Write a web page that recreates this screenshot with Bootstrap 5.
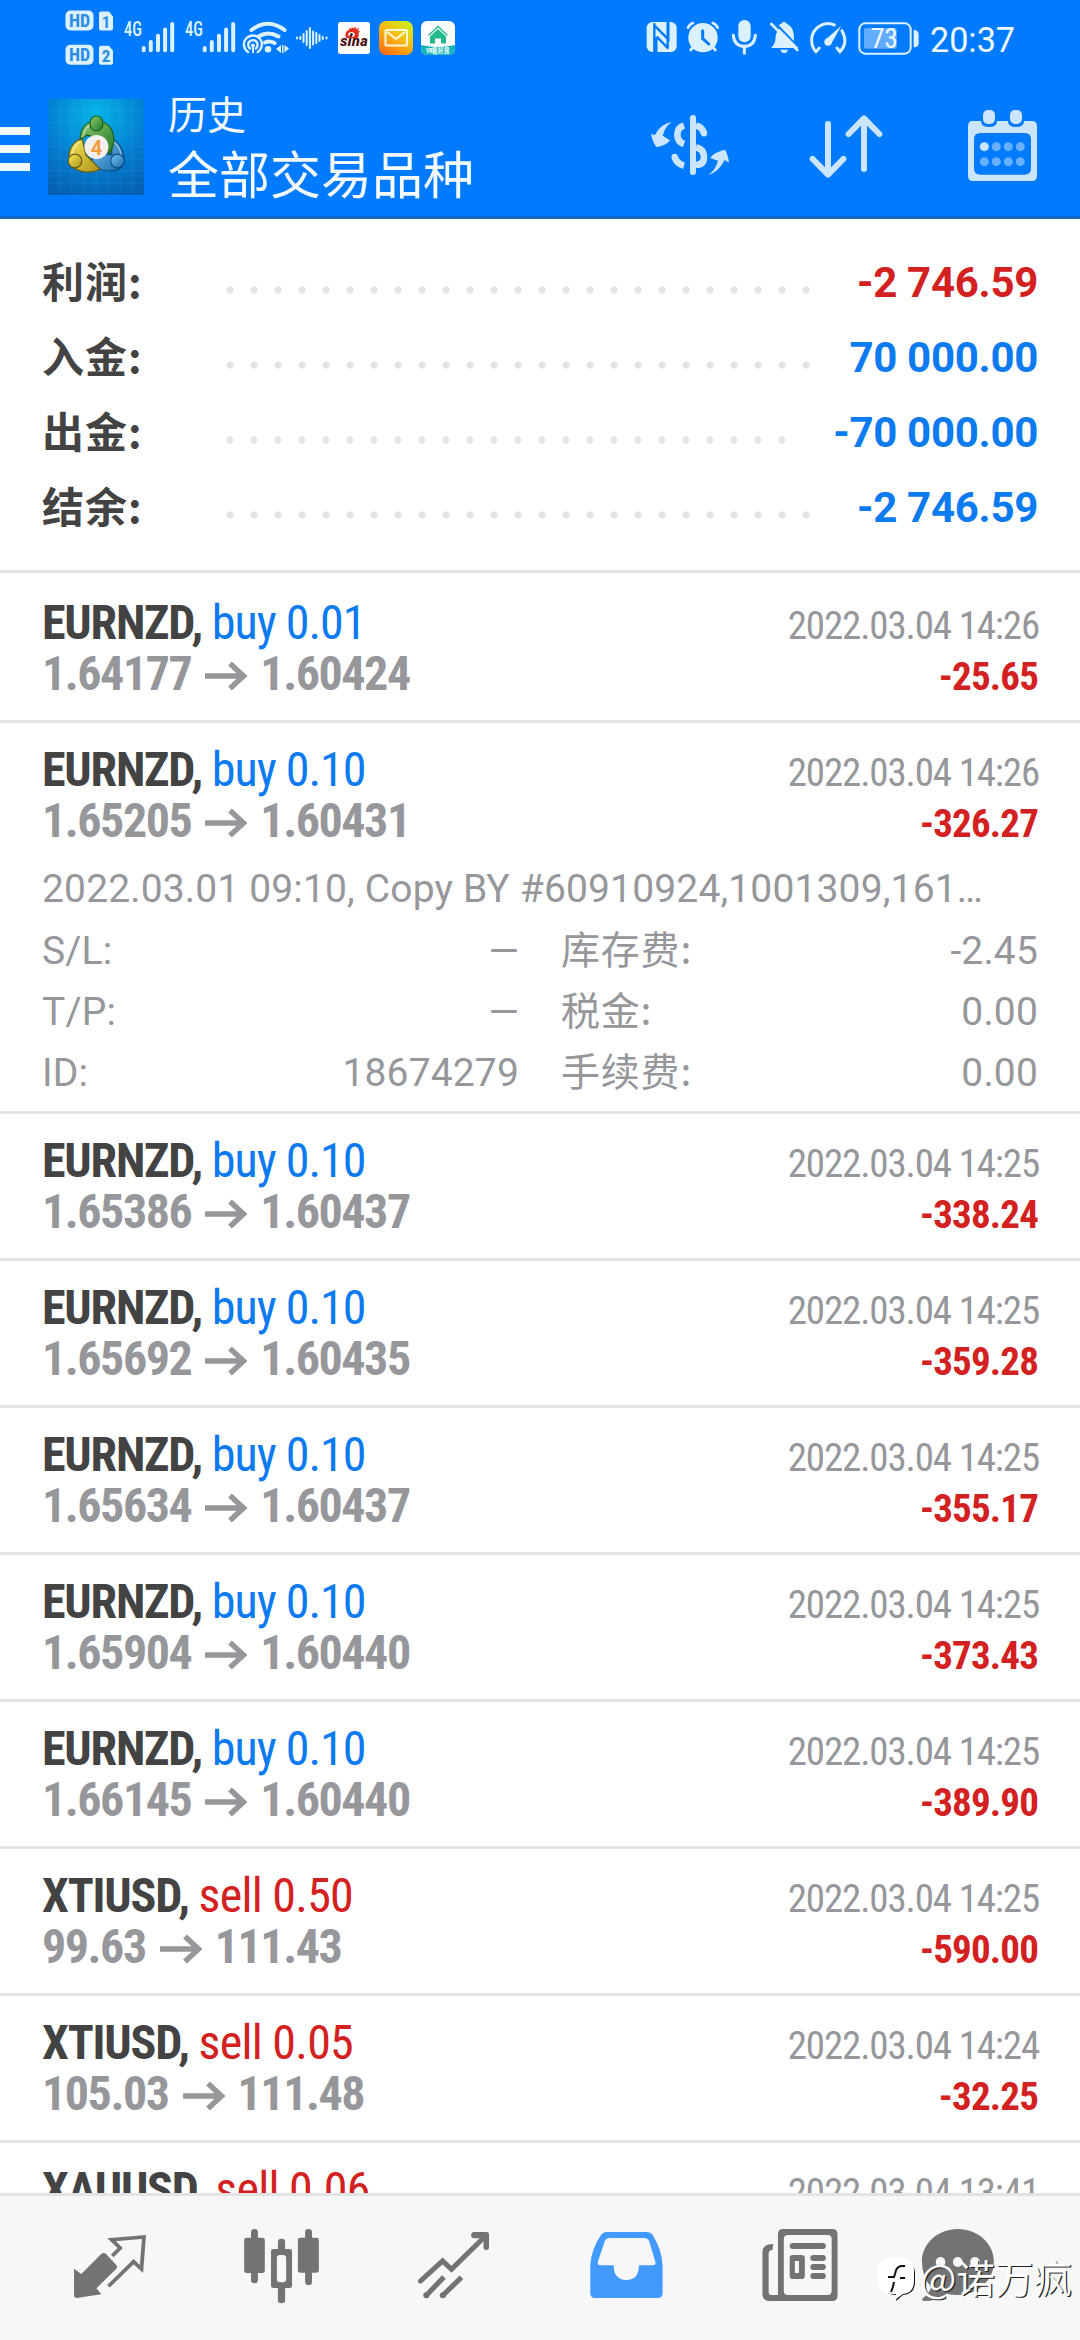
<!DOCTYPE html>
<html lang="zh-CN">
<head>
<meta charset="utf-8">
<meta name="viewport" content="width=device-width, initial-scale=1">
<title>历史</title>
<link rel="stylesheet" href="https://cdn.jsdelivr.net/npm/bootstrap@5.3.0/dist/css/bootstrap.min.css">
<style>
  :root { --blue:#007aff; --ink:#434343; --muted-ink:#96979b; --loss:#d32020; --gain:#0c7af0; --rule:#e3e3e3; }
  body { width:1080px; height:2340px; overflow:hidden; background:#fff; font-family:Roboto,"Noto Sans CJK SC",sans-serif; color:var(--ink); }
  svg { display:block; flex:none; }
  .app-head { background:var(--blue); height:219px; border-bottom:3px solid #1568c2; }
  .status { height:75px; }
  .status .ico { height:75px; fill:#dcf1ff; color:#dcf1ff; }
  .status text { font-family:"Roboto Condensed",Roboto,sans-serif; }
  .tools { height:141px; }
  .tools .ico { height:141px; fill:#cce5ff; stroke:#cce5ff; }
  .titles { font-family:"Noto Sans CJK SC",sans-serif; color:#f4faff; padding:12px 0 0 24px; }
  .title-sm { font-size:39px; line-height:50px; font-weight:400; }
  .title-lg { font-size:51px; line-height:70px; font-weight:400; }
  .summary { padding:26px 42px 25px; height:354px; border-bottom:3px solid var(--rule); }
  .sum-line { height:75px; line-height:75px; font-size:42px; font-weight:700; letter-spacing:-.3px; }
  .sum-name { width:176px; font-family:"Noto Sans CJK SC",sans-serif; line-height:67px; letter-spacing:1px; padding-top:1px; align-self:flex-start; }
  .dots { width:600px; height:75px; background:radial-gradient(circle at 12px 45px,#e3e3e3 3.2px,transparent 4px) 0 0/24px 75px repeat-x; }
  .dots-short { width:576px; }
  .deal { height:147px; padding:21px 42px 0; border-bottom:3px solid var(--rule); flex:none; }
  .deal.first { height:150px; padding-top:24px; }
  .deal.open { height:391px; }
  .deal-line { height:51px; line-height:51px; font-family:"Roboto Condensed",Roboto,sans-serif; white-space:nowrap; }
  .sym { font-size:48px; letter-spacing:-1.2px; }
  .sym b { font-weight:700; }
  .sym .buy { letter-spacing:-1px; }
  .sym .sell { letter-spacing:-.75px; }
  .price { font-size:48px; font-weight:700; letter-spacing:-1.45px; color:var(--muted-ink); }
  .price svg { margin:5px 13px 0 14px; }
  .when { font-size:39px; letter-spacing:-1.15px; color:var(--muted-ink); margin-right:-1px; }
  .result { font-size:39px; font-weight:700; letter-spacing:-.85px; color:var(--loss); }
  .buy { color:var(--gain); } .sell { color:var(--loss); }
  .more { margin-top:13px; font-size:39px; line-height:61px; color:var(--muted-ink); white-space:nowrap; letter-spacing:.15px; }
  .more-line { height:61px; }
  .more-l { width:477px; margin-right:42px; }
  .zh { font-family:"Noto Sans CJK SC",sans-serif; line-height:54px; letter-spacing:.8px; }
  .tabs { height:147px; border-top:3px solid var(--rule); background:#f7f7f7; }
  .tabs svg { fill:#737373; stroke:#737373; width:180px; height:144px; }
  .stamp { right:8px; bottom:39px; color:#fff; font:400 38.4px/50px "Noto Sans CJK SC",sans-serif; text-shadow:1.2px 1.2px 0 #222; letter-spacing:.1px; }
</style>
<script src="https://cdn.jsdelivr.net/npm/bootstrap@5.3.0/dist/js/bootstrap.bundle.min.js"></script>
</head>
<body class="d-flex flex-column position-relative m-0">

<header class="app-head flex-shrink-0">
  <div class="status d-flex">
    <!-- HD / SIM markers -->
    <svg class="ico" width="120" viewBox="0 0 120 75">
      <rect x="65.5" y="10.5" width="28" height="20" rx="5"/><rect x="65.5" y="44.7" width="28" height="20" rx="5"/>
      <path d="M101 11.5h8l4 5v12q0 2-2 2h-10q-2 0-2-2v-15q0-2 2-2zM101 45.7h8l4 5v12q0 2-2 2h-10q-2 0-2-2v-15q0-2 2-2z"/>
      <g fill="#2a8de6" font-weight="700" font-size="18" text-anchor="middle"><text x="79.5" y="27">HD</text><text x="79.5" y="61">HD</text><text x="106" y="27.5" font-size="17">1</text><text x="106" y="61.5" font-size="17">2</text></g>
    </svg>
    <svg class="ico" width="61" viewBox="120 0 61 75">
      <text x="124" y="36" font-size="20" font-weight="500" textLength="18" lengthAdjust="spacingAndGlyphs">4G</text>
      <path fill="none" stroke="currentColor" stroke-width="4" stroke-linecap="round" d="M143.7 48v2.2M150.8 42v8.2M158 35.7v14.5M165.1 29.5v20.7M172.2 24v26.2"/>
    </svg>
    <svg class="ico" width="60" viewBox="120 0 60 75">
      <text x="124" y="36" font-size="20" font-weight="500" textLength="18" lengthAdjust="spacingAndGlyphs">4G</text>
      <path fill="none" stroke="currentColor" stroke-width="4" stroke-linecap="round" d="M143.7 48v2.2M150.8 42v8.2M158 35.7v14.5M165.1 29.5v20.7M172.2 24v26.2"/>
    </svg>
    <!-- Wi-Fi with hotspot -->
    <svg class="ico" width="51" viewBox="241 0 51 75">
      <g fill="none" stroke="currentColor" stroke-linecap="round"><path stroke-width="4" d="M251.5 30q16.500-12.500 33 0M258.5 36.500q9.500-6 20 0M265 42.500q4.500-2 9.500.5"/>
      <path stroke-width="2.400" d="M248 52a9 9 0 1 1 9.800 0M250 48.500a4.700 4.700 0 1 1 5.800 0"/></g>
      <circle cx="268" cy="49.300" r="3.300"/><circle cx="252.900" cy="45.500" r="2"/><path d="M252 46h2v7h-2zM276 49l5-4v8zM282 45h1.500v8H282zM284.500 45l4.500 3.500-4.500 4z"/>
    </svg>
    <svg class="ico" width="42" viewBox="292 0 42 75"><path fill="none" stroke="currentColor" stroke-width="2" stroke-linecap="round" d="M297 37.500v1M300.300 37v2M303.500 34v8M306.700 31v14M309.900 28v20M313.100 31.500v13M316.300 33v10M319.500 35v6M322.700 37v2M326.500 37.500v1"/></svg>
    <!-- sina -->
    <svg class="ico" width="40" viewBox="334 0 40 75">
      <rect x="338" y="22" width="32" height="32" rx="2.500" fill="#fff"/>
      <path fill="#e0301e" d="M346 38q-2-7 3-8l0-2 2 1 1-2 1.500 1.500 2-2 .5 2.500 3-1-1 2.500 2 1-1.500 1.500q1 3-1 5z"/><ellipse cx="351.500" cy="34.500" rx="3.200" ry="2.500" fill="#fff"/><circle cx="351.500" cy="34.500" r="1.300" fill="#300"/>
      <text x="340" y="46" font-size="15" font-weight="700" font-style="italic" fill="#4a1010" textLength="28" lengthAdjust="spacingAndGlyphs">sina</text>
    </svg>
    <!-- mail -->
    <svg class="ico" width="43" viewBox="374 0 43 75">
      <defs><linearGradient id="gm" x1=".15" y1="1" x2=".85" y2="0"><stop offset="0" stop-color="#ff6a10"/><stop offset=".5" stop-color="#fdb515"/><stop offset="1" stop-color="#c8f01e"/></linearGradient></defs>
      <rect x="379" y="21" width="34" height="34" rx="7" fill="url(#gm)"/>
      <g fill="none" stroke="#fff8d8" stroke-width="2" stroke-linejoin="round"><rect x="385.500" y="30" width="21.500" height="15.500" rx="1"/><path d="M387 32l9 7 9-7"/></g>
    </svg>
    <!-- house app -->
    <svg class="ico" width="43" viewBox="417 0 43 75">
      <clipPath id="ch"><rect x="421" y="21" width="34" height="34" rx="6"/></clipPath>
      <g clip-path="url(#ch)"><path fill="#fff" d="M421 21h34v34h-34z"/><path fill="#14b3b8" d="M421 45q17 4 34 0v10h-34z"/></g>
      <path fill="#23b98d" d="M438 29l8 7.500v7h-5v-5h-6v5h-5v-7z"/><path d="M428.500 35.500l9.500-9 9.500 9" fill="none" stroke="#23b98d" stroke-width="1.500"/>
      <text x="426" y="53" font-size="6.500" font-weight="700" fill="#fff" textLength="24" lengthAdjust="spacingAndGlyphs">VR租好房</text>
    </svg>

    <!-- NFC, alarm, microphone, muted bell, performance -->
    <svg class="ico ms-auto" width="45" viewBox="105 0 135 225"><rect x="137" y="66" width="90" height="90" rx="17"/><path fill="none" stroke="#007aff" stroke-width="7" d="M160 156V76l42 42V66M160 84v-14M202 146l-35-36M166 112v44M200 64v78"/></svg>
    <svg class="ico" width="43" viewBox="243 0 129 225"><circle cx="309" cy="113" r="44"/><path fill="none" stroke="currentColor" stroke-width="8" stroke-linecap="round" d="M264 83q5-11 15-14M353 83q-5-11-15-14M280 141l-8 9M338 141l8 9"/><path fill="none" stroke="#007aff" stroke-width="9" stroke-linecap="round" d="M308 92v24l18 16"/></svg>
    <svg class="ico" width="39" viewBox="372 0 117 225"><rect x="415" y="60" width="37" height="67" rx="18"/><path fill="none" stroke="currentColor" stroke-width="9" stroke-linecap="round" d="M400 106q3 33 33 33t33-33M433 141v19"/></svg>
    <svg class="ico" width="43" viewBox="489 0 129 225"><path d="M513 144q12-12 13-25 0-22 12-33l57 58zM536 76q5-5 8-5 2-6 8-6t8 6q22 8 22 44v8zM541 149h23q-3 10-11 10t-12-10z"/><path stroke="currentColor" stroke-width="8" stroke-linecap="round" d="M514 72l78 78"/></svg>
    <svg class="ico" width="47" viewBox="618 0 141 225"><path fill="none" stroke="currentColor" stroke-width="9" stroke-linecap="round" d="M658 144l-10 11q-13-12-13-34a49 49 0 0 1 68-46M726 92q20 36-6 63l-9-11"/><circle cx="684" cy="126" r="11"/><path d="M676 119l48-42-31 56z"/></svg>
    <svg class="ico" width="66" viewBox="759 0 198 225"><rect x="778" y="70" width="154" height="91" rx="18" fill="none" stroke="currentColor" stroke-width="6"/><rect x="792" y="84" width="98" height="62" rx="6" fill="#61acff"/><path d="M941 90h6q9 4 9 12v28q0 8-9 12h-6z"/><text x="812" y="144" font-size="82" fill="#eefaff" textLength="82" lengthAdjust="spacingAndGlyphs">73</text></svg>
    <svg class="ico" width="161" viewBox="919 0 161 75"><text x="930" y="51.500" font-size="35.500" fill="#eefaff" textLength="85" lengthAdjust="spacingAndGlyphs" style="font-family:Roboto">20:37</text></svg>
  </div>

  <div class="tools d-flex">
    <svg class="ico" width="48" viewBox="0 75 48 141"><path stroke="none" fill="#f1f9ff" d="M0 127h30v8H0zM0 145h30v8H0zM0 163h30v8H0z"/></svg>
    <!-- app emblem -->
    <svg width="96" height="141" viewBox="0 0 96 141">
      <defs><radialGradient id="lb" cx=".5" cy=".15" r=".9"><stop offset="0" stop-color="#06b4e8"/><stop offset=".55" stop-color="#0480d2"/><stop offset="1" stop-color="#0560b4"/></radialGradient>
      <linearGradient id="lg" x1="0" y1="0" x2="1" y2="1"><stop offset="0" stop-color="#8dcb70"/><stop offset="1" stop-color="#237a28"/></linearGradient>
      <linearGradient id="ly" x1="0" y1="0" x2="1" y2="1"><stop offset="0" stop-color="#f5e85a"/><stop offset="1" stop-color="#ad9118"/></linearGradient>
      <linearGradient id="lc" x1="0" y1="0" x2="1" y2="1"><stop offset="0" stop-color="#79c5f2"/><stop offset="1" stop-color="#1668ac"/></linearGradient></defs>
      <g transform="translate(0 24)"><rect width="96" height="96" fill="url(#lb)"/>
      <path stroke="#7fd4ff" stroke-opacity=".12" stroke-width="1" d="M12 0v96M24 0v96M36 0v96M48 0v96M60 0v96M72 0v96M84 0v96M0 12h96M0 24h96M0 36h96M0 48h96M0 60h96M0 72h96M0 84h96"/>
      <g stroke-width="1.200"><path fill="url(#lc)" stroke="#124d80" d="M62 39q14 6 14 24-2 9-15 9-13-1-19-9l8-9 14 2z"/><path fill="url(#ly)" stroke="#665c10" d="M34 39q-13 6-13 19 0 13 17 15 10 0 14-3l-14-14z"/><path fill="url(#lg)" stroke="#1c5f20" d="M32 41q1-19 17-19 16 1 17 19-1 10-5 14l-9-15-13-4z"/>
      <g fill="none" stroke="#fff" stroke-opacity=".45" stroke-width="1.500"><path d="M35 38q2-12 11-13M24 57q1-10 8-14M66 43q7 6 7 14"/></g>
      <ellipse cx="48.500" cy="24.500" rx="6.500" ry="7.500" fill="url(#lg)" stroke="#1c5f20"/><circle cx="27" cy="62" r="6.800" fill="url(#ly)" stroke="#665c10"/><circle cx="69.500" cy="62" r="6.800" fill="url(#lc)" stroke="#124d80"/></g>
      <circle cx="48.500" cy="48" r="12" fill="#f4f0ef"/><text x="48.500" y="55.500" text-anchor="middle" font-size="20" font-weight="700" fill="#f29a3c" font-family="Roboto">4</text></g>
    </svg>
    <div class="titles d-flex flex-column"><span class="title-sm">历史</span><span class="title-lg">全部交易品种</span></div>

    <svg class="ico ms-auto" width="170" viewBox="0 225 510 423">
      <path stroke="none" d="M270 354q0-9 9-9t9 9v162q0 9-9 9t-9-9zM215 366q-20 14-27 41l22 14q-12 17-41 20-11-14-16-39l12 3q17-34 50-39zM325 525q22-16 29-43l-24-8q12-18 45-25 9 14 12 39l-13-8q-17 35-49 45z"/>
      <g fill="none" stroke-width="20"><path d="M252 376q-20 7-20 28t20 28M288 376q20 6 24 24M288 442q24 6 24 29t-24 24M224 471q6 20 28 26"/></g><g stroke="none"><circle cx="312" cy="400" r="9.500"/><circle cx="224" cy="471" r="9.500"/></g>
    </svg>
    <svg class="ico" width="160" viewBox="510 225 480 423"><path fill="none" stroke-width="18" stroke-linecap="round" stroke-linejoin="round" d="M684 372v150M638 477l46 47 46-47M792 507V356M746 402l46-47 46 47"/></svg>
    <svg class="ico" width="150" viewBox="990 225 450 423">
      <path stroke="none" fill-rule="evenodd" d="M1119 363h24q0 18 24 18t24-18h33q0 18 24 18t24-18h23q16 0 16 16v148q0 16-16 16h-176q-15 0-15-16V379q0-16 15-16zM1141 399q-19 0-19 19v87q0 19 19 19h133q19 0 19-19v-87q0-19-19-19z"/>
      <g stroke="none"><rect x="1149" y="330" width="36" height="42" rx="15"/><rect x="1230" y="330" width="36" height="42" rx="15"/><circle cx="1153" cy="440" r="13.500"/>
      <g fill="#66b0ff"><circle cx="1189" cy="440" r="13.500"/><circle cx="1225" cy="440" r="13.500"/><circle cx="1261" cy="440" r="13.500"/><circle cx="1153" cy="485" r="13.500"/><circle cx="1189" cy="485" r="13.500"/><circle cx="1225" cy="485" r="13.500"/><circle cx="1261" cy="485" r="13.500"/></g></g>
    </svg>
  </div>
</header>

<main class="flex-grow-1 overflow-hidden d-flex flex-column">
  <section class="summary flex-shrink-0">
    <div class="sum-line d-flex align-items-start"><span class="sum-name">利润:</span><span class="dots"></span><span class="ms-auto sell">-2 746.59</span></div>
    <div class="sum-line d-flex align-items-start"><span class="sum-name">入金:</span><span class="dots"></span><span class="ms-auto buy">70 000.00</span></div>
    <div class="sum-line d-flex align-items-start"><span class="sum-name">出金:</span><span class="dots dots-short"></span><span class="ms-auto buy">-70 000.00</span></div>
    <div class="sum-line d-flex align-items-start"><span class="sum-name">结余:</span><span class="dots"></span><span class="ms-auto buy">-2 746.59</span></div>
  </section>
  <section id="deals" class="d-flex flex-column"></section>
</main>

<nav class="tabs d-flex flex-shrink-0">
  <svg viewBox="0 168 522.700 432" preserveAspectRatio="none"><path stroke="none" d="M215 386l21 16 58-60q7-6 14 0l29 32q6 7 0 13l-57 58 14 18-71 11q-8 0-8-9z"/><path fill="none" stroke-width="11" stroke-linejoin="miter" d="M326 348l23-24-25-25 94-8-7 96-23-22-73 74"/></svg>
  <svg viewBox="522.700 168 522.700 432" preserveAspectRatio="none"><g stroke="none"><rect x="709" y="293" width="60" height="106" rx="7"/><rect x="729" y="267" width="20" height="163" rx="10"/><rect x="865" y="293" width="61" height="105" rx="7"/><rect x="886" y="267" width="20" height="168" rx="10"/><rect x="787" y="327" width="61" height="117" rx="7"/><rect x="807" y="296" width="21" height="194" rx="10"/><rect x="804" y="345" width="27" height="82" rx="9" fill="#f7f7f7"/></g></svg>
  <svg viewBox="1045.300 168 522.700 432" preserveAspectRatio="none"><g fill="none" stroke-width="15"><path stroke-linecap="round" stroke-linejoin="miter" d="M1221 423l64-60 26 25 98-99"/><path d="M1238 466l51-55M1286 466l54-54"/></g><g stroke="none"><circle cx="1238" cy="466" r="9"/><circle cx="1286" cy="466" r="9"/><path d="M1376 276h36q8 0 8 8v38q0 8-8 8t-8-8v-27h-28q-8 0-8-9t8-10z"/></g></svg>
  <svg viewBox="0 168 522.700 432" preserveAspectRatio="none"><path fill="#429aff" stroke="none" fill-rule="evenodd" d="M193 276h117q11 0 17 9 27 44 29 92v83q0 14-14 14H160q-14 0-14-14v-83q2-48 31-92 6-9 16-9zM203 294q-11 0-15 10l-20 61q-3 11 8 11h38q0 44 37 44t36-44h38q13 0 10-11l-18-61q-4-10-15-10z"/></svg>
  <svg viewBox="522.700 168 522.700 432" preserveAspectRatio="none"><path stroke="none" fill-rule="evenodd" d="M706 267h142q16 0 16 16v184q0 16-16 16H668q-22 0-22-22V336q0-24 31-24l-2 18q-11 0-11 11v115q0 9 9 9h18V283q0-16 15-16zM720 285q-12 0-12 12v156q0 12 12 12h115q12 0 12-12V297q0-12-12-12z"/><g stroke="none"><rect x="725" y="309" width="105" height="18" rx="9"/><path fill-rule="evenodd" d="M735 345h24q10 0 10 10v52q0 10-10 10h-24q-10 0-10-10v-52q0-10 10-10zM740 363v36h12v-36z"/><rect x="785" y="345" width="45" height="18" rx="9"/><rect x="785" y="372" width="45" height="18" rx="9"/><rect x="785" y="399" width="45" height="18" rx="9"/></g></svg>
  <svg viewBox="1045.300 168 522.700 432" preserveAspectRatio="none"><path stroke="none" d="M1213 267c58 0 105 43 105 98s-47 100-105 100q-17 0-32-4-27 22-66 22-10-2-2-10 16-10 23-32-27-32-27-76c0-55 47-98 104-98z"/><g fill="#f7f7f7" stroke="none"><ellipse cx="1163" cy="366" rx="14" ry="15"/><ellipse cx="1213" cy="366" rx="14" ry="15"/><ellipse cx="1263" cy="366" rx="14" ry="15"/></g></svg>
</nav>

<div class="stamp position-absolute d-flex align-items-center">
  <svg width="42" height="50" viewBox="0 0 42 50"><g transform="translate(0 4)"><path fill="#111" d="M16 6h8q13 0 13 13v8q0 12-12 13l-7 6 1-6q-15 0-15-14v-8Q4 6 16 6z"/><path fill="#fff" d="M13 3h11q12 0 12 12v11q0 12-11 13l-7 5 0-5h-5Q0 38 0 26V15Q0 3 13 3z"/><path fill="none" stroke="#111" stroke-width="2" d="M27 11h-4q-5 1-6 8l-1 3h-6M22 23h5M16 27q-1 6-3 10"/></g></svg>
  <span>@诺万疯</span>
</div>

<script>
  const deals = [
    ["EURNZD","buy","0.01","1.64177","1.60424","2022.03.04 14:26","-25.65"],
    ["EURNZD","buy","0.10","1.65205","1.60431","2022.03.04 14:26","-326.27"],
    ["EURNZD","buy","0.10","1.65386","1.60437","2022.03.04 14:25","-338.24"],
    ["EURNZD","buy","0.10","1.65692","1.60435","2022.03.04 14:25","-359.28"],
    ["EURNZD","buy","0.10","1.65634","1.60437","2022.03.04 14:25","-355.17"],
    ["EURNZD","buy","0.10","1.65904","1.60440","2022.03.04 14:25","-373.43"],
    ["EURNZD","buy","0.10","1.66145","1.60440","2022.03.04 14:25","-389.90"],
    ["XTIUSD","sell","0.50","99.63","111.43","2022.03.04 14:25","-590.00"],
    ["XTIUSD","sell","0.05","105.03","111.48","2022.03.04 14:24","-32.25"],
    ["XAUUSD","sell","0.06","","","2022.03.04 13:41",""]
  ];
  const arrow = '<svg width="42" height="30" viewBox="0 0 42 30"><path fill="none" stroke="#96979b" stroke-width="5.5" d="M0 15h38M25 2.500L38.500 15 25 27.500"/></svg>';
  const details = `<div class="more">
    <div class="more-line">2022.03.01 09:10, Copy BY #60910924,1001309,161…</div>
    ${[["S/L:","—","库存费:","-2.45"],["T/P:","—","税金:","0.00"],["ID:","18674279","手续费:","0.00"]].map(r =>
      `<div class="more-line d-flex align-items-baseline"><div class="more-l d-flex justify-content-between"><span>${r[0]}</span><span>${r[1]}</span></div><span class="zh">${r[2]}</span><span class="ms-auto">${r[3]}</span></div>`).join("")}
  </div>`;
  document.getElementById("deals").innerHTML = deals.map((d, i) => `
    <article class="deal ${i === 0 ? "first" : i === 1 ? "open" : ""}">
      <div class="deal-line d-flex justify-content-between align-items-baseline"><span class="sym"><b>${d[0]},</b> <span class="${d[1]}">${d[1]} ${d[2]}</span></span><span class="when">${d[5]}</span></div>
      ${d[3] ? `<div class="deal-line d-flex justify-content-between align-items-baseline"><span class="price d-flex align-items-center"><span>${d[3]}</span>${arrow}<span>${d[4]}</span></span><span class="result">${d[6]}</span></div>` : ""}
      ${i === 1 ? details : ""}
    </article>`).join("");
</script>
</body>
</html>
